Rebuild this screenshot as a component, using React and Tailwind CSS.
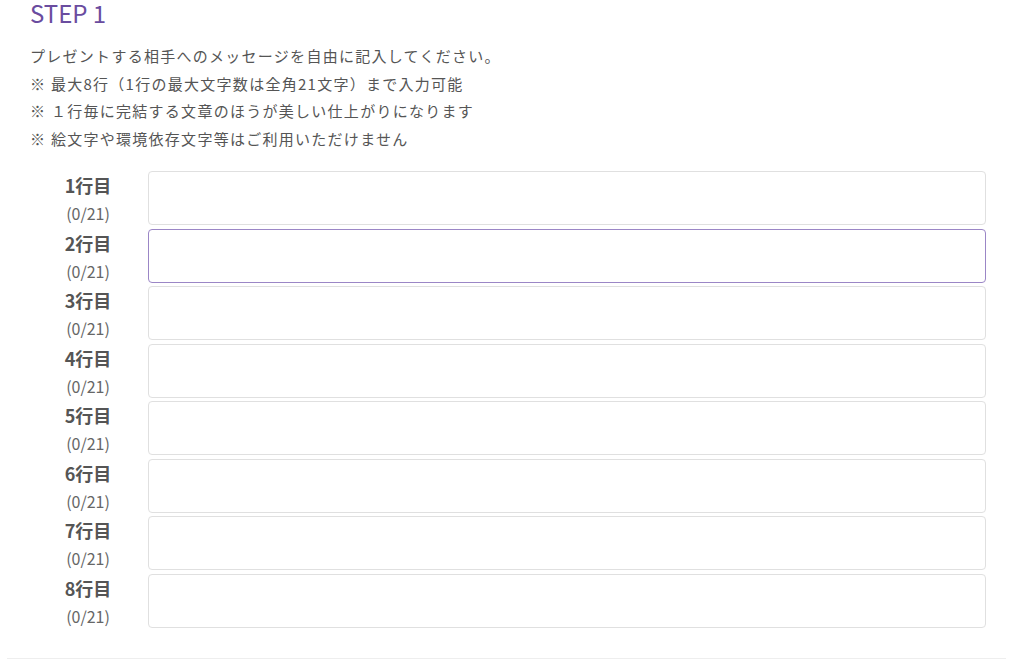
const LINES = [1, 2, 3, 4, 5, 6, 7, 8];

const NOTES = [
  'プレゼントする相手へのメッセージを自由に記入してください。',
  '※ 最大8行（1行の最大文字数は全角21文字）まで入力可能',
  '※ １行毎に完結する文章のほうが美しい仕上がりになります',
  '※ 絵文字や環境依存文字等はご利用いただけません',
];

function LineRow({ n, active }) {
  return (
    <div className="flex h-[54px] items-stretch">
      <div className="mr-[2px] flex w-[116px] flex-col items-center text-[#555]">
        <span className="text-[18px] font-bold leading-[28px]">{n}行目</span>
        <span className="text-[16px] leading-[28px] text-[#666]">(0/21)</span>
      </div>
      <input
        type="text"
        className={
          active
            ? 'h-full flex-1 rounded-[4px] border border-[#9b86c6] bg-white px-3 outline-none'
            : 'h-full flex-1 rounded-[4px] border border-[#e0e0e0] bg-white px-3 outline-none'
        }
      />
    </div>
  );
}

export default function App() {
  return (
    <div
      className="min-h-screen bg-white"
      style={{ fontFamily: '"Noto Sans CJK JP", "Noto Sans", sans-serif' }}
    >
      <div className="pl-[30px] pr-[38px]">
        <h2 className="text-[24px] leading-[26px] text-[#6a4c9f]">STEP 1</h2>
        <div className="mt-[16px] text-[15px] leading-[27.5px] tracking-[0.085em] text-[#555]">
          {NOTES.map((t) => (
            <p key={t}>{t}</p>
          ))}
        </div>
        <div className="mt-[19px] flex flex-col gap-[3.5px]">
          {LINES.map((n) => (
            <LineRow key={n} n={n} active={n === 2} />
          ))}
        </div>
      </div>
      <div className="mx-[7px] mr-[18px] mt-[30px] border-t border-[#eee]" />
    </div>
  );
}
